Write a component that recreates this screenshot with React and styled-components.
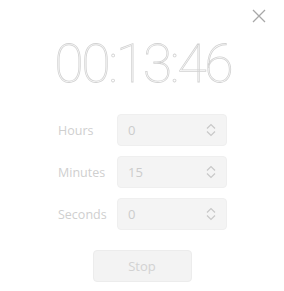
import React from "react";
import styled, { createGlobalStyle } from "styled-components";

const Global = createGlobalStyle`
  html, body { margin: 0; padding: 0; background: #ffffff; }
  body { font-family: "Open Sans", "Liberation Sans", sans-serif; }
`;

const Page = styled.div`
  position: relative;
  width: 284px;
  height: 291px;
  display: flex;
  flex-direction: column;
  align-items: center;
  box-sizing: border-box;
  padding-top: 32px;
`;

const Close = styled.button`
  position: absolute;
  top: 9px;
  right: 18px;
  width: 14px;
  height: 14px;
  padding: 0;
  border: none;
  background: none;
  display: flex;
`;

const Time = styled.div`
  font-family: Roboto, sans-serif;
  font-weight: 100;
  font-size: 53px;
  line-height: 64px;
  color: transparent;
  -webkit-text-stroke: 0.8px #d2d2d2;
  letter-spacing: -2px;
  margin-right: -2px;
`;

const Form = styled.div`
  margin-top: 18px;
  display: grid;
  grid-template-columns: 60px 110px;
  row-gap: 10px;
  align-items: center;
`;

const Label = styled.label`
  font-size: 12.5px;
  color: #cfcfcf;
  padding-left: 1px;
`;

const Select = styled.div`
  height: 32px;
  box-sizing: border-box;
  border: 1px solid #efefef;
  border-radius: 4px;
  background: #f4f4f4;
  display: flex;
  align-items: center;
  justify-content: space-between;
  padding: 0 9px 0 10px;
  font-size: 13px;
  color: #cccccc;
`;

const Button = styled.button`
  margin-top: 20px;
  width: 99px;
  height: 32px;
  border: 1px solid #ececec;
  border-radius: 4px;
  background: #f3f3f3;
  color: #d2d2d2;
  font-family: "Open Sans", sans-serif;
  font-size: 13px;
`;

const Chevrons = () => (
  <svg width="12" height="14" viewBox="0 0 12 14" fill="none" stroke="#c8c8c8" strokeWidth="1.2">
    <path d="M2 5.5 L6 1.5 L10 5.5" />
    <path d="M2 8.5 L6 12.5 L10 8.5" />
  </svg>
);

const rows = [
  ["Hours", "0"],
  ["Minutes", "15"],
  ["Seconds", "0"],
];

export default function App() {
  return (
    <>
      <Global />
      <Page>
        <Close aria-label="close">
          <svg width="14" height="14" viewBox="0 0 14 14" stroke="#a8a8a8" strokeWidth="1.3">
            <path d="M1 1 L13 13 M13 1 L1 13" />
          </svg>
        </Close>
        <Time>00:13:46</Time>
        <Form>
          {rows.map(([l, v]) => (
            <React.Fragment key={l}>
              <Label>{l}</Label>
              <Select>
                <span>{v}</span>
                <Chevrons />
              </Select>
            </React.Fragment>
          ))}
        </Form>
        <Button>Stop</Button>
      </Page>
    </>
  );
}
